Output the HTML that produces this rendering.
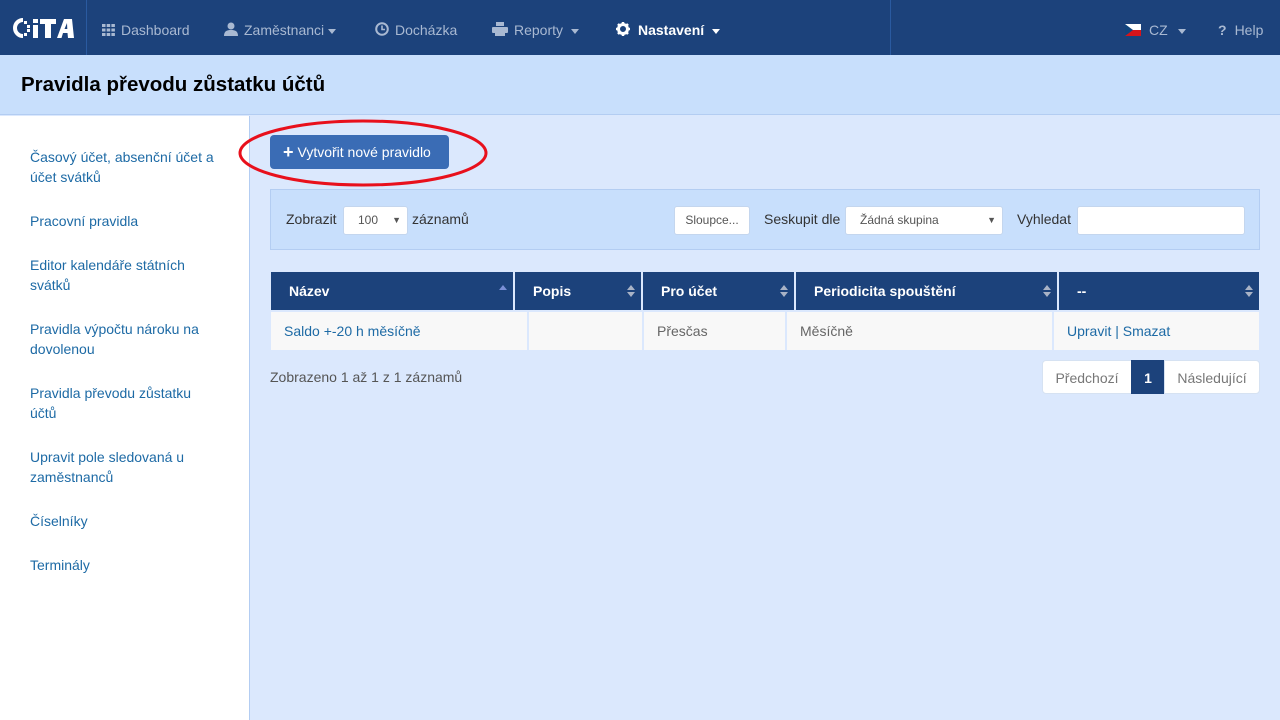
<!DOCTYPE html>
<html><head><meta charset="utf-8"><style>
*{box-sizing:border-box;margin:0;padding:0}
body{width:1280px;height:720px;overflow:hidden;font-family:"Liberation Sans",Arial,sans-serif;font-size:14px;background:#dbe8fd;position:relative;color:#333}
.nav{position:absolute;left:0;top:0;width:1280px;height:55px;background:#1c427b}
.nav .sep{position:absolute;top:0;width:1px;height:55px;background:#2a5aa0}
.ni{position:absolute;top:0;height:55px;line-height:60px;color:#a9b9d2;font-size:14px;white-space:nowrap}
.ni.act{color:#fff;font-weight:bold}
.car{display:inline-block;width:0;height:0;border-left:4px solid transparent;border-right:4px solid transparent;border-top:5px solid currentColor;vertical-align:middle;margin-left:4px}
.hdr{position:absolute;left:0;top:55px;width:1280px;height:60px;background:#c8dffc;border-bottom:1px solid #b3cdf2}
.hdr h1{position:absolute;left:21px;top:18px;font-size:20.5px;font-weight:bold;color:#000}
.side{position:absolute;left:0;top:116px;width:250px;height:604px;background:#fff;border-right:1px solid #b3cdf2}
.side a{position:absolute;left:30px;width:188px;color:#1d6aa5;font-size:14px;line-height:20px;text-decoration:none}
.btn{position:absolute;left:270px;top:135px;width:179px;height:34px;background:#3a6cb5;border-radius:4px;color:#fff;font-size:14px;line-height:34px;padding-left:13px}
.tb{position:absolute;left:270px;top:189px;width:990px;height:61px;background:#c8dffc;border:1px solid #b3cdf2}
.in{position:absolute;background:#fff;border:1px solid #c4d6ee;border-radius:3px;font-size:12px;color:#555}
.th{position:absolute;top:272px;height:38px;background:#1c427b;color:#fff;font-size:14px;font-weight:bold;line-height:38px;padding-left:18px}
.sort{position:absolute;right:6px;top:12px;width:8px;height:14px}
.td{position:absolute;top:312px;height:38px;background:#f8f8f8;line-height:38px;font-size:14px;color:#666;padding-left:13px}
a.l{color:#1d6aa5;text-decoration:none}
.pg{position:absolute;top:360px;height:34px;line-height:34px;background:#fff;border:1px solid #d6e2f2;color:#777;font-size:14px;text-align:center}
</style></head><body>
<div class="nav">
  <svg style="position:absolute;left:10px;top:16px" width="66" height="24" viewBox="0 0 66 24">
    <path d="M13 4 A8 8 0 1 0 13 20" fill="none" stroke="#fff" stroke-width="4"/>
    <g fill="#fff"><rect x="14" y="5" width="3" height="3"/><rect x="17" y="9" width="3" height="3"/><rect x="17" y="13" width="3" height="3"/><rect x="14" y="17" width="3" height="3"/></g>
    <rect x="23" y="3" width="5" height="4" fill="#fff"/><rect x="23" y="9" width="5" height="13" fill="#fff"/>
    <path d="M30 3h16v5h-5v14h-6V8h-5z" fill="#fff"/>
    <path d="M47 22 L54 3 H62 L64 22 H58 L57.5 17 H53 L51.5 22Z M54.5 13 H57.3 L57 7Z" fill="#fff" fill-rule="evenodd"/>
  </svg>
  <div class="sep" style="left:86px"></div>
  <div class="sep" style="left:890px"></div>
  <div class="ni" style="left:102px"><svg width="13" height="12" style="vertical-align:-1px;margin-right:6px" viewBox="0 0 13 12" fill="#a9b9d2"><rect x="0" y="0" width="3.5" height="3"/><rect x="4.7" y="0" width="3.5" height="3"/><rect x="9.4" y="0" width="3.5" height="3"/><rect x="0" y="4.5" width="3.5" height="3"/><rect x="4.7" y="4.5" width="3.5" height="3"/><rect x="9.4" y="4.5" width="3.5" height="3"/><rect x="0" y="9" width="3.5" height="3"/><rect x="4.7" y="9" width="3.5" height="3"/><rect x="9.4" y="9" width="3.5" height="3"/></svg>Dashboard</div>
  <div class="ni" style="left:224px"><svg width="14" height="14" style="vertical-align:-1px;margin-right:6px" viewBox="0 0 14 14" fill="#a9b9d2"><circle cx="7" cy="4" r="3.5"/><path d="M0 14c0-5 3-6 7-6s7 1 7 6z"/></svg>Zaměstnanci<span class="car"></span></div>
  <div class="ni" style="left:375px"><svg width="14" height="14" style="vertical-align:-1px;margin-right:6px" viewBox="0 0 14 14"><circle cx="7" cy="7" r="5.8" fill="none" stroke="#a9b9d2" stroke-width="2"/><path d="M7 3.5V7.5H10" fill="none" stroke="#a9b9d2" stroke-width="1.6"/></svg>Docházka</div>
  <div class="ni" style="left:492px"><svg width="16" height="14" style="vertical-align:-1px;margin-right:6px" viewBox="0 0 16 14" fill="#a9b9d2"><rect x="4" y="0" width="8" height="4"/><rect x="0" y="5" width="16" height="6" rx="1"/><rect x="3" y="10" width="10" height="4"/></svg>Reporty <span class="car"></span></div>
  <div class="ni act" style="left:616px"><svg width="14" height="14" style="vertical-align:-1px;margin-right:8px" viewBox="0 0 14 14"><circle cx="7" cy="7" r="4.5" fill="none" stroke="#fff" stroke-width="3"/><g stroke="#fff" stroke-width="2.5"><path d="M7 0v3M7 11v3M0 7h3M11 7h3M2 2l2 2M10 10l2 2M2 12l2-2M10 4l2-2"/></g></svg>Nastavení <span class="car"></span></div>
  <div class="ni" style="left:1125px"><svg width="16" height="12" style="vertical-align:-1px;margin-right:8px" viewBox="0 0 16 12"><rect width="16" height="6" fill="#fff"/><rect y="6" width="16" height="6" fill="#d7141a"/><path d="M0 0L8 6L0 12Z" fill="#11457e"/></svg>CZ <span class="car" style="margin-left:6px"></span></div>
  <div class="ni" style="left:1218px"><b style="margin-right:8px">?</b>Help</div>
</div>
<div class="hdr"><h1>Pravidla převodu zůstatku účtů</h1></div>
<div class="side">
  <a style="top:31px">Časový účet, absenční účet a účet svátků</a>
  <a style="top:95px">Pracovní pravidla</a>
  <a style="top:139px">Editor kalendáře státních svátků</a>
  <a style="top:203px">Pravidla výpočtu nároku na dovolenou</a>
  <a style="top:267px">Pravidla převodu zůstatku účtů</a>
  <a style="top:331px">Upravit pole sledovaná u zaměstnanců</a>
  <a style="top:395px">Číselníky</a>
  <a style="top:439px">Terminály</a>
</div>
<div class="btn"><b style="font-size:18px;vertical-align:-1px;margin-right:4px">+</b>Vytvořit nové pravidlo</div>
<svg style="position:absolute;left:238px;top:118px" width="252" height="72"><ellipse cx="125" cy="35" rx="123" ry="32" fill="none" stroke="#e8101c" stroke-width="3"/></svg>
<div class="tb">
  <span style="position:absolute;left:15px;top:21px">Zobrazit</span>
  <div class="in" style="left:72px;top:16px;width:65px;height:29px;line-height:27px;padding-left:14px">100<span style="position:absolute;right:6px;font-size:9px">▼</span></div>
  <span style="position:absolute;left:141px;top:21px">záznamů</span>
  <div class="in" style="left:403px;top:16px;width:76px;height:29px;line-height:27px;text-align:center">Sloupce...</div>
  <span style="position:absolute;left:493px;top:21px">Seskupit dle</span>
  <div class="in" style="left:574px;top:16px;width:158px;height:29px;line-height:27px;padding-left:14px">Žádná skupina<span style="position:absolute;right:6px;font-size:9px">▼</span></div>
  <span style="position:absolute;left:746px;top:21px">Vyhledat</span>
  <div class="in" style="left:806px;top:16px;width:168px;height:29px"></div>
</div>
<div class="th" style="left:271px;width:242px">Název<svg class="sort" viewBox="0 0 8 14"><path d="M0 6L4 1L8 6Z" fill="#7a8fd6"/></svg></div>
<div class="th" style="left:515px;width:126px">Popis<svg class="sort" viewBox="0 0 8 14" fill="#a9b3c6"><path d="M0 6L4 1L8 6Z"/><path d="M0 8L4 13L8 8Z"/></svg></div>
<div class="th" style="left:643px;width:151px">Pro účet<svg class="sort" viewBox="0 0 8 14" fill="#a9b3c6"><path d="M0 6L4 1L8 6Z"/><path d="M0 8L4 13L8 8Z"/></svg></div>
<div class="th" style="left:796px;width:261px">Periodicita spouštění<svg class="sort" viewBox="0 0 8 14" fill="#a9b3c6"><path d="M0 6L4 1L8 6Z"/><path d="M0 8L4 13L8 8Z"/></svg></div>
<div class="th" style="left:1059px;width:200px">--<svg class="sort" viewBox="0 0 8 14" fill="#a9b3c6"><path d="M0 6L4 1L8 6Z"/><path d="M0 8L4 13L8 8Z"/></svg></div>
<div class="td" style="left:271px;width:256px"><a class="l">Saldo +-20 h měsíčně</a></div>
<div class="td" style="left:529px;width:113px"></div>
<div class="td" style="left:644px;width:141px">Přesčas</div>
<div class="td" style="left:787px;width:265px">Měsíčně</div>
<div class="td" style="left:1054px;width:205px"><a class="l">Upravit | Smazat</a></div>
<div style="position:absolute;left:270px;top:369px;color:#555">Zobrazeno 1 až 1 z 1 záznamů</div>
<div class="pg" style="left:1042px;width:90px;border-radius:4px 0 0 4px">Předchozí</div>
<div class="pg" style="left:1131px;width:34px;background:#1c427b;border-color:#1c427b;color:#fff;font-weight:bold">1</div>
<div class="pg" style="left:1164px;width:96px;border-radius:0 4px 4px 0">Následující</div>
</body></html>
